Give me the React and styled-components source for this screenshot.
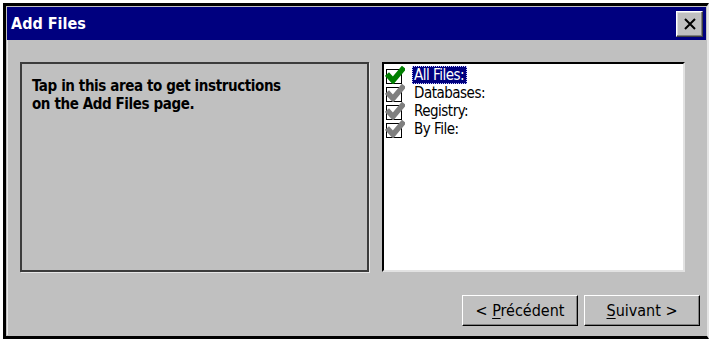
import React from 'react';
import styled, { createGlobalStyle } from 'styled-components';

const GlobalStyle = createGlobalStyle`
  html, body {
    margin: 0;
    padding: 0;
    background: #ffffff;
  }
  body {
    font-family: "DejaVu Sans Condensed", "DejaVu Sans", sans-serif;
  }
`;

const Window = styled.div`
  box-sizing: border-box;
  margin: 3px 0 0 3px;
  width: 706px;
  height: 336px;
  border-top: 3px solid #000;
  border-left: 3px solid #000;
  border-bottom: 3px solid #000;
  border-right: 2px solid #e4e4e4;
  background: #c0c0c0;
  padding: 1px;
  display: flex;
  flex-direction: column;
`;

const TitleBar = styled.div`
  height: 33px;
  background: #00007f;
  display: flex;
  align-items: center;
  justify-content: space-between;
  padding: 0 3px 0 4px;
  flex-shrink: 0;
`;

const Title = styled.span`
  color: #fff;
  font-weight: bold;
  font-size: 16px;
`;

const CloseButton = styled.button`
  box-sizing: border-box;
  width: 27px;
  height: 26px;
  padding: 0;
  background: #c0c0c0;
  border: 1px solid;
  border-color: #fff #404040 #404040 #fff;
  box-shadow: inset -1px -1px 0 #808080, inset 1px 1px 0 #dfdfdf;
  display: flex;
  align-items: center;
  justify-content: center;
`;

const Client = styled.div`
  flex: 1;
  display: flex;
  flex-direction: column;
  padding: 22px 6px 0 12px;
  border-left: 1px solid #e8e8e8;
`;

const PanelRow = styled.div`
  display: flex;
  gap: 13px;
  height: 210px;
`;

const HelpPanel = styled.div`
  box-sizing: border-box;
  width: 349px;
  border: 2px solid #3c3c3c;
  box-shadow: 1px 1px 0 #e6e6e6;
  padding: 13px 10px;
  font-weight: bold;
  font-size: 15px;
  letter-spacing: -0.4px;
  line-height: 18px;
  color: #000;
`;

const FileList = styled.div`
  box-sizing: border-box;
  width: 303px;
  background: #fff;
  border-style: solid;
  border-width: 2px;
  border-color: #000 #e2e2e2 #e2e2e2 #000;
  padding: 2px 0 0 1px;
  display: flex;
  flex-direction: column;
`;

const Item = styled.div`
  display: flex;
  align-items: center;
  height: 18px;
  gap: 7px;
  font-size: 15px;
  letter-spacing: -0.5px;
  color: #000;
`;

const Label = styled.span`
  padding: 0 3px 0 2px;
  line-height: 18px;
  background: ${(p) => (p.$selected ? '#00007f' : 'transparent')};
  color: ${(p) => (p.$selected ? '#fff' : '#000')};
  outline: ${(p) => (p.$selected ? '1px dotted #c8c8ff' : 'none')};
  outline-offset: -1px;
`;

const ButtonRow = styled.div`
  display: flex;
  justify-content: flex-end;
  gap: 6px;
  margin-top: 23px;
`;

const NavButton = styled.button`
  box-sizing: border-box;
  width: 116px;
  height: 31px;
  background: #c0c0c0;
  border: 1px solid;
  border-color: #fff #000 #000 #fff;
  box-shadow: inset -1px -1px 0 #808080;
  font-family: "DejaVu Sans Condensed", "DejaVu Sans", sans-serif;
  font-size: 16px;
  color: #000;
  padding: 0;
  u {
    text-decoration: underline;
    text-underline-offset: 2px;
  }
`;

const CheckIcon = ({ color }) => (
  <svg width="20" height="18" viewBox="0 0 20 18">
    <rect x="1.5" y="3.5" width="15" height="14" fill="#fff" stroke="#000" />
    <path d="M2 8 L8 14.5 L19 1.5" fill="none" stroke={color} strokeWidth="5.5" />
  </svg>
);

const items = [
  { label: 'All Files:', color: '#007f00', selected: true },
  { label: 'Databases:', color: '#7f7f7f' },
  { label: 'Registry:', color: '#7f7f7f' },
  { label: 'By File:', color: '#7f7f7f' },
];

export default function App() {
  return (
    <>
      <GlobalStyle />
      <Window>
        <TitleBar>
          <Title>Add Files</Title>
          <CloseButton aria-label="Close">
            <svg width="12" height="12" viewBox="0 0 12 12">
              <path d="M1 1 L11 11 M11 1 L1 11" stroke="#000" strokeWidth="2" />
            </svg>
          </CloseButton>
        </TitleBar>
        <Client>
          <PanelRow>
            <HelpPanel>
              Tap in this area to get instructions
              <br />
              on the Add Files page.
            </HelpPanel>
            <FileList>
              {items.map((it) => (
                <Item key={it.label}>
                  <CheckIcon color={it.color} />
                  <Label $selected={it.selected}>{it.label}</Label>
                </Item>
              ))}
            </FileList>
          </PanelRow>
          <ButtonRow>
            <NavButton>
              &lt; <u>P</u>récédent
            </NavButton>
            <NavButton>
              <u>S</u>uivant &gt;
            </NavButton>
          </ButtonRow>
        </Client>
      </Window>
    </>
  );
}
